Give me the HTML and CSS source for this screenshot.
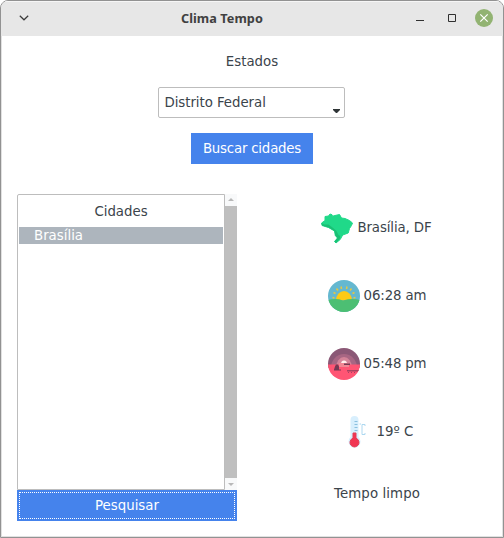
FILE: index.html
```html
<!DOCTYPE html>
<html lang="pt-BR">
<head>
<meta charset="utf-8">
<title>Clima Tempo</title>
<link rel="stylesheet" href="styles.css">
</head>
<body>
<div class="window">
  <header class="titlebar">
    <svg class="menu" width="10" height="6" viewBox="0 0 10 6"><path d="M.8.8 5 4.8 9.2.8" fill="none" stroke="#3c3c3c" stroke-width="1.2"/></svg>
    <h1>Clima Tempo</h1>
    <div class="controls">
      <svg width="8" height="8" viewBox="0 0 8 8"><path d="M0 6.5h8" stroke="#303030"/></svg>
      <svg width="8" height="8" viewBox="0 0 8 8"><path d="M.5.5h7v7h-7z" fill="none" stroke="#303030"/></svg>
      <svg width="18" height="18" viewBox="0 0 18 18"><circle cx="9" cy="9" r="9" fill="#92b372"/><path d="m5.3 5.3 7.4 7.4m0-7.4-7.4 7.4" stroke="#fff" stroke-width="1.2"/></svg>
    </div>
  </header>
  <main>
    <section class="search">
      <label>Estados</label>
      <div class="combo"><span>Distrito Federal</span><svg width="7" height="4" viewBox="0 0 7 4"><path d="M0 0h7v1L4 4H3L0 1z" fill="#2e3436"/></svg></div>
      <button class="find">Buscar cidades</button>
    </section>
    <section class="results">
      <div class="cities">
        <div class="list">
          <div class="tree">
            <div class="heading">Cidades</div>
            <div class="row">Brasília</div>
          </div>
          <div class="scrollbar">
            <svg width="12" height="12" viewBox="0 0 12 12"><path d="M3.5 7h5V6h-1V5h-1V4h-1v1h-1v1h-1z" fill="#b8b8b8"/></svg>
            <div class="thumb"></div>
            <svg width="12" height="12" viewBox="0 0 12 12"><path d="M3.5 5h5v1h-1v1h-1v1h-1V7h-1V6h-1z" fill="#b8b8b8"/></svg>
          </div>
        </div>
        <button class="submit"><span>Pesquisar</span></button>
      </div>
      <div class="weather">
        <div class="fact place">
          <svg width="32" height="32" viewBox="0 0 32 32"><g stroke-linejoin="round" stroke-width="1"><path d="M.6 11 4 8.500V4.500L7.500 4 9 2l2 .7.500 1.500L14 3.500l4.500-1L20.500 6l3.500.5 4.500 2L31.500 11l-1 2.500-2 3-1.300 4.500-5.500 2-2.500 4.500L15 31l-1.500-1.500 3-3.500-2.200-2.500L13.500 19l-6-3.500L1 13.500z" fill="#20d989" stroke="#20d989"/><path d="M.6 11 3 12.500 7.500 12.500 11.500 15.500 15.500 19l2 4 1.700 1-.5 3L15 31l-1.500-1.500 3-3.500-2.200-2.500L13.500 19l-6-3.500L1 13.500z" fill="#1abf75"/></g></svg>
          <span>Brasília, DF</span>
        </div>
        <div class="fact time">
          <svg width="32" height="32" viewBox="0 0 32 32"><defs><clipPath id="disc"><circle cx="16" cy="16" r="16"/></clipPath></defs><g clip-path="url(#disc)"><path d="M0 0h32v32H0z" fill="#65b8d0"/><path d="M8 20.500a8 9.500 0 0 1 16 0z" fill="#fdca16"/><path d="M4.500 17.500l2 .5M5.500 12.500l2 1M8.500 8.500l1.500 2M13 6.500l.5 2.500M19 6.500l-.5 2.500M23.500 8.500l-1.500 2M26.500 12.500l-2 1M27.500 17.500l-2 .5" stroke="#e8c741" stroke-width="1.500"/><path d="M0 20q8-2 15 .5Q24 18 32 20v12H0z" fill="#4cbf73"/></g></svg>
          <span>06:28 am</span>
        </div>
        <div class="fact time sunset">
          <svg width="32" height="32" viewBox="0 0 32 32"><g clip-path="url(#disc)"><path d="M0 0h32v20H0z" fill="#8b5876"/><path d="M3 20a13 14 0 0 1 26 0z" fill="#a76683"/><path d="M8 20a8 11 0 0 1 16 0z" fill="#d38499"/><path d="M13 16a3 3.500 0 0 1 6 0z" fill="#fff0ee"/><path d="M0 16.500h32V32H0z" fill="#ff5574"/><path d="M11 15h10v4H11z" fill="#f18694"/><path d="M16 15.500h6v1.500h-6zM6 21.500l1-3 1-2h2l1 2v3h2v1H6z" fill="#763953"/><path d="M19 22h13v1.500H19zM20 24h1v1h-1zm3 0h1v1h-1zm3 0h1v1h-1z" fill="#a74361"/></g></svg>
          <span>05:48 pm</span>
        </div>
        <div class="fact temp">
          <svg width="32" height="32" viewBox="0 0 32 32"><path d="M9.500 4a4 4 0 0 1 8 0v17a6 6 0 1 1-8 0z" fill="#d8effd"/><path d="M12 17h3v5.200a4.500 4.500 0 1 1-3 0z" fill="#f13552" stroke="#e33d56"/><path d="M13.500 5.500h3M13.500 8.500h3M13.500 11.500h3M13.500 14.500h3" stroke="#8bc0df"/><path d="M18.500 8h1.500M24 10V8.500h-3v10h3V17" fill="none" stroke="#add8f0"/></svg>
          <span>19º C</span>
        </div>
        <div class="fact summary">Tempo limpo</div>
      </div>
    </section>
  </main>
</div>
</body>
</html>
```
FILE: styles.css
```css
* { box-sizing: border-box; }
body { margin: 0; background: #fff; color: #3b444b; font: 13.33px/18px "DejaVu Sans", sans-serif; }
.window { width: 504px; height: 538px; border: 1px solid #929292; border-radius: 8px 8px 0 0; box-shadow: inset 0 0 0 1px #e1e1e1; overflow: hidden; background: #fff; }
.titlebar { height: 35px; display: grid; grid-template-columns: 162px auto 1fr; align-items: center; padding: 0 10px 0 18px; background: #e7e7e7; border-top: 1px solid #f6f6f6; }
h1 { margin: -2px 0 0; font: bold 12.7px/18px "Noto Sans", sans-serif; letter-spacing: .05px; color: #404040; }
.controls { display: flex; align-items: center; justify-content: flex-end; gap: 24px; margin-top: -2px; }
.controls svg:last-child { margin-left: -5px; }
.menu { margin-top: -2px; }
main { padding: 17px 16px 0; }
.search { display: flex; flex-direction: column; align-items: center; }
label { height: 18px; }
.combo { width: 187px; height: 31px; margin: 16px 1px 0 -1px; padding: 6px 4px 4px 6px; display: flex; justify-content: space-between; border: 1px solid #bdbdbd; border-radius: 2px; letter-spacing: -.05px; }
.combo svg { align-self: flex-end; }
button { border: 0; padding: 0; background: #4583ec; color: #fff; font: inherit; }
.find { width: 122px; height: 31px; margin-top: 15px; letter-spacing: -.2px; }
.results { display: grid; grid-template-columns: 220px 280px; margin-top: 30px; }
.list { display: flex; height: 296px; }
.tree { width: 208px; border: 1px solid #bdbdbd; padding: 8px 1px; border-radius: 2px 0 0; }
.heading { height: 24px; text-align: center; }
.row { height: 17px; line-height: 17px; padding-left: 15px; background: #adb5bd; color: #fff; }
.scrollbar { width: 12px; display: flex; flex-direction: column; }
.scrollbar svg { background: #f8f9fa; }
.thumb { flex: 1; background: #bfbfbf; }
.submit { display: block; width: 220px; height: 31px; padding: 2px; }
.submit span { display: block; height: 27px; line-height: 25px; border: 1px dotted #fff; }
.weather { width: 280px; padding-top: 18px; display: flex; flex-direction: column; align-items: center; gap: 36px; }
.fact { height: 32px; display: flex; align-items: center; gap: 4px; }
.place, .time { letter-spacing: -.1px; }
.place { padding-right: 1px; }
.sunset { letter-spacing: -.15px; }
.summary { height: 20px; letter-spacing: .1px; }
```
